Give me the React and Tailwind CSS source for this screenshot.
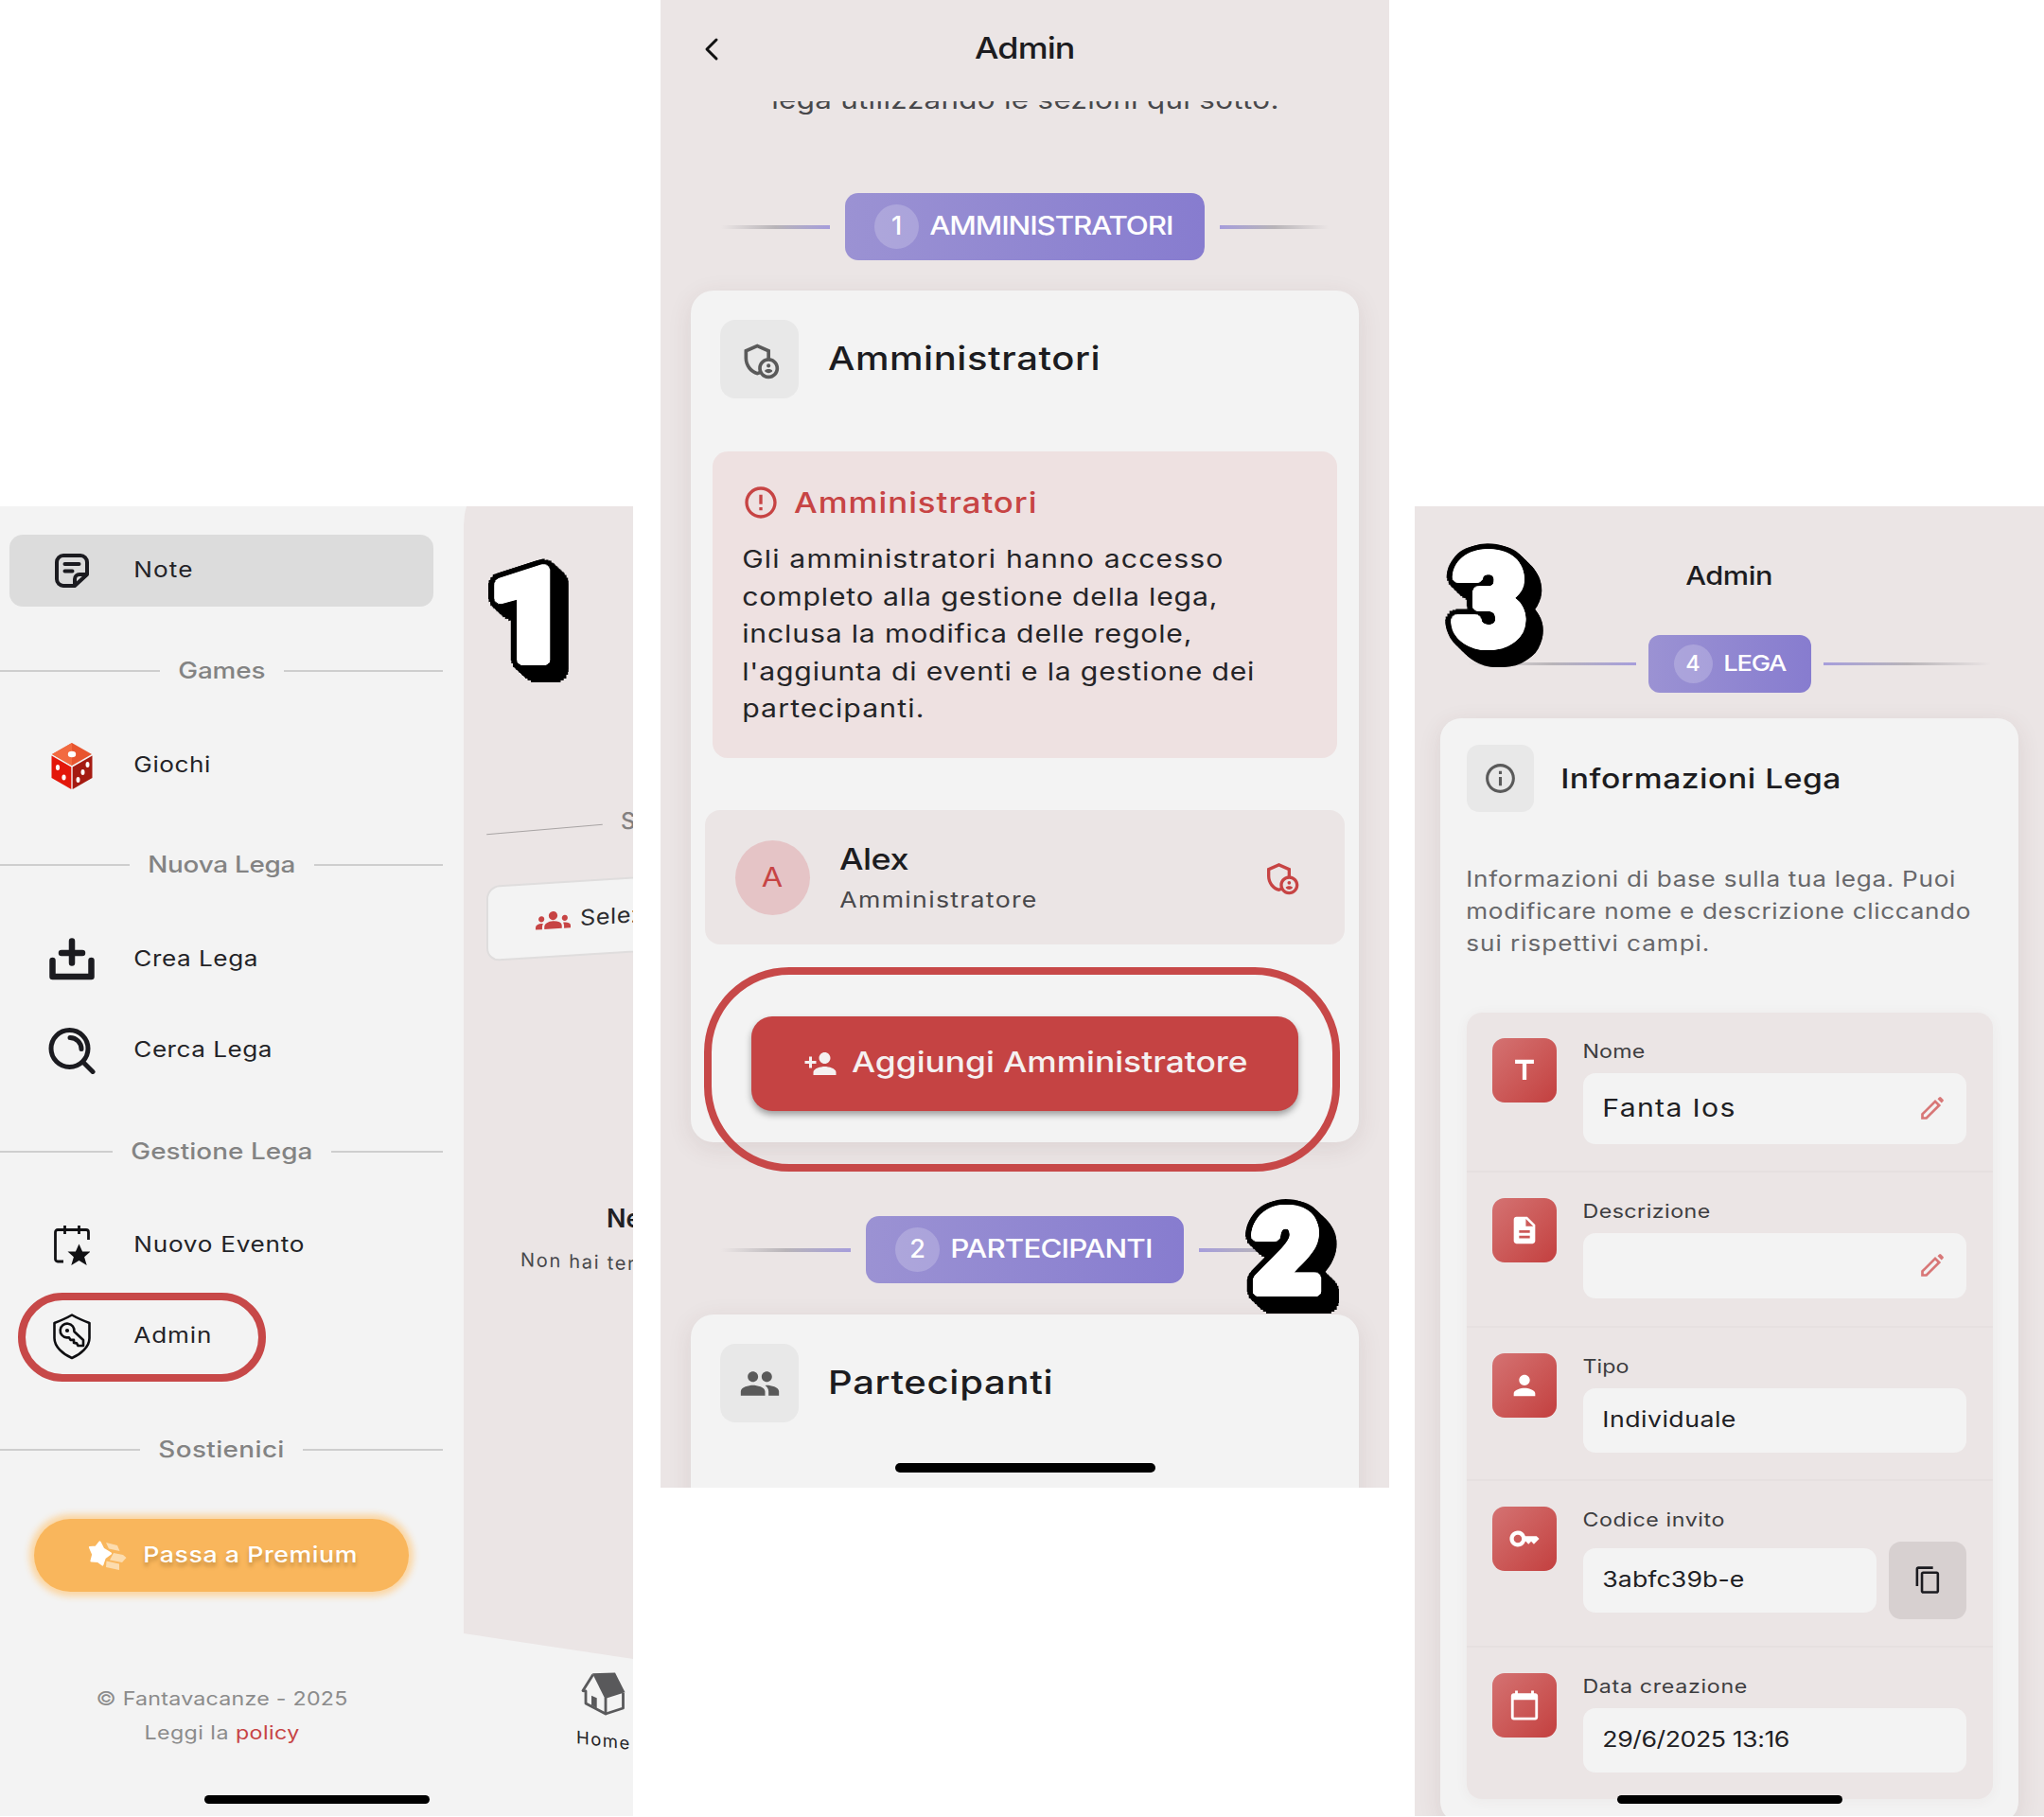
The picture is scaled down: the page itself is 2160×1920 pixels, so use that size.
import React, { useLayoutEffect, useRef, useState } from "react";
import {
  MdOutlineAdminPanelSettings,
  MdErrorOutline,
  MdPersonAdd,
  MdGroup,
  MdGroups,
  MdInfoOutline,
  MdTitle,
  MdDescription,
  MdPerson,
  MdKey,
  MdCalendarToday,
  MdContentCopy,
} from "react-icons/md";

/* One line of text, tracked so that it fills the given width. */
function Fit({ w, className = "", children }) {
  const ref = useRef(null);
  const [ls, setLs] = useState(0);
  useLayoutEffect(() => {
    const el = ref.current;
    const old = el.style.letterSpacing;
    el.style.letterSpacing = "0px";
    const natural = el.getBoundingClientRect().width / 1.16;
    el.style.letterSpacing = old;
    const size = parseFloat(getComputedStyle(el).fontSize);
    setLs((w / 1.16 - (natural - size * 0.04)) / (el.textContent.length - 1));
  }, [w]);
  return (
    <span className={`inline-block shrink-0 whitespace-nowrap text-left ${className}`} style={{ width: w }}>
      <span
        ref={ref}
        className="inline-block origin-left -translate-x-[0.03em] scale-x-[1.16]"
        style={{ letterSpacing: ls }}
      >
        {children}
      </span>
    </span>
  );
}

/* Comic style step number: rounded white face, black outline and solid extrusion. */
function Sticker({ n, className }) {
  const shadows = [];
  const ring = (r, t, color) => {
    for (let a = 0; a < 20; a++) {
      const k = (a * Math.PI) / 10;
      shadows.push(`${(t + r * Math.cos(k)).toFixed(1)}px ${(t + r * Math.sin(k)).toFixed(1)}px 0 ${color}`);
    }
  };
  ring(2.5, 0, "#fff");
  ring(5, 0, "#fff");
  for (let t = 0; t <= 12; t += 1.5) ring(11, t, "#000");
  return (
    <div
      className={`absolute font-['Roboto',sans-serif] font-black leading-none text-white ${className}`}
      style={{ textShadow: shadows.join(",") }}
    >
      {n}
    </div>
  );
}

function NoteIcon() {
  return (
    <svg viewBox="0 0 36 36" className="h-[36px] w-[36px]" fill="none" stroke="#1b1b20" strokeWidth="4" strokeLinecap="round" strokeLinejoin="round">
      <path d="M21 34H9a7 7 0 0 1-7-7V9a7 7 0 0 1 7-7h18a7 7 0 0 1 7 7v13L21 34v-7a5 5 0 0 1 5-5h8" />
      <path d="M10.500 11h15M10.500 18.500h8" />
    </svg>
  );
}

function DiceIcon() {
  return (
    <svg viewBox="0 0 44 49" className="h-[49px] w-[44px]">
      <path d="M22 0 43 12 22 24 1 12Z" fill="#e8552f" />
      <path d="M22 0v24L1 12Z" fill="#f26a40" />
      <path d="M.5 13.500 21.300 25.500V49L.5 37Z" fill="#e3170a" />
      <path d="M43.500 13.500 22.700 25.500V49L43.500 37Z" fill="#a51b12" />
      <g fill="#fff">
        <ellipse cx="22" cy="12" rx="4.200" ry="3.200" />
        <ellipse cx="7" cy="26" rx="2.100" ry="3" />
        <ellipse cx="13.500" cy="36.500" rx="2.100" ry="3" />
        <ellipse cx="38.500" cy="23" rx="2" ry="3" />
        <ellipse cx="33.500" cy="31" rx="2" ry="3" />
        <ellipse cx="28.500" cy="39" rx="2" ry="3" />
      </g>
    </svg>
  );
}

function CreateIcon() {
  return (
    <svg viewBox="0 0 50 46" className="h-[46px] w-[50px]" fill="none" stroke="#1b1b20" strokeWidth="6.500" strokeLinecap="round" strokeLinejoin="round">
      <path d="M4.500 24v17h41V24" />
      <path d="M25 3.500v23M14 16h22" />
    </svg>
  );
}

function SearchIcon() {
  return (
    <svg viewBox="0 0 50 50" className="h-[50px] w-[50px]" fill="none" stroke="#1b1b20" strokeWidth="5" strokeLinecap="round">
      <circle cx="22.500" cy="23" r="19.500" />
      <path d="M37 37.500 47 47.500" />
      <path d="M23 11.500a12 12 0 0 1 12 12" />
    </svg>
  );
}

function EventIcon() {
  return (
    <svg viewBox="0 0 38 44" className="h-[44px] w-[38px]" fill="none" stroke="#111114" strokeWidth="2.800">
      <path d="M10 39H4a2.500 2.500 0 0 1-2.500-2.500V8A2.500 2.500 0 0 1 4 5.500h30A2.500 2.500 0 0 1 36.500 8v8M11.500 1v9M26.500 1v9" />
      <path d="m26.500 20.500 3.600 8H38.500l-6.400 5.800 2.600 8.700-8.200-4.900-8.200 4.900 2.600-8.700-6.400-5.800h8.400Z" fill="#111114" stroke="none" />
    </svg>
  );
}

function ShieldKeyIcon() {
  return (
    <svg viewBox="0 0 42 50" className="h-[50px] w-[42px]" fill="none" stroke="#0e0e11" strokeWidth="2.600" strokeLinejoin="round">
      <path d="M21 2.500C27 6 33 8.500 39.500 11v16c0 9-9 17-18.500 21C11.500 44 2.500 36 2.500 27V11C9 8.500 15 6 21 2.500Z" />
      <path d="M23.400 20a7.400 7.400 0 1 0-8 6.400h2.600l1.500 2.500H23v3l3 .5 1.500 2.600H33v-6Z" />
      <circle cx="16" cy="19" r="2.100" fill="#0e0e11" stroke="none" />
    </svg>
  );
}

function StarIcon() {
  return (
    <svg viewBox="0 0 47 47" className="size-[47px]">
      <path d="m22 10 12 3 2.500 6L25 16.500ZM30 21l10 2 3.500 3-4.500 5-13-2.500ZM22.500 29.500l13.500 3V39l-14-3Z" fill="#fcdcae" />
      <path d="M15.500 9.500 19.200 16.800 27 21.500 20.800 26 18.300 33.500 13.500 29.800 6.500 29.500 8.300 22.500 5 15 11.500 14.500Z" fill="#fff" stroke="#fff" strokeWidth="2.200" strokeLinejoin="round" />
    </svg>
  );
}

function HouseIcon() {
  return (
    <svg viewBox="0 0 48 48" className="size-[48px]" fill="none" stroke="#59595b" strokeWidth="2.800" strokeLinejoin="round">
      <path d="M12.700 3.500 2 20.500l3 .5v13l21 11V28" />
      <path d="m26 45 18.500-6V23" />
      <path d="M12 2.200 36 1.500 46.500 22.300 25.300 29Z" fill="#59595b" stroke="none" />
      <path d="m11 25.700 5.700 2.600V39L11 35.700Z" fill="#59595b" stroke="none" />
    </svg>
  );
}

function PencilIcon() {
  return (
    <svg viewBox="0 0 24 24" className="size-[24px]" fill="none" stroke="#d87777" strokeWidth="2.700">
      <path d="M1.500 22.500v-4.200L15 4.800 19.200 9 5.700 22.500Z" />
      <path d="m17.500 2.300 1.700-1.700a1.400 1.400 0 0 1 2 0l2.200 2.200a1.400 1.400 0 0 1 0 2l-1.700 1.700Z" fill="#d87777" stroke="none" />
    </svg>
  );
}

function MenuRow({ icon, label, w, className = "" }) {
  return (
    <div className={`ml-[10px] flex h-[76px] w-[448px] items-center rounded-[14px] ${className}`}>
      <div className="ml-[36px] flex w-[60px] justify-center">{icon}</div>
      <Fit w={w} className="mb-px ml-[36px] text-[22.500px] leading-none text-[#232327]">{label}</Fit>
    </div>
  );
}

function Heading({ label, w, className = "" }) {
  return (
    <div className={`flex h-[40px] w-[468px] items-center gap-[20px] ${className}`}>
      <div className="h-[1.500px] flex-1 bg-[#cecece]" />
      <Fit w={w} className="text-[24px] font-medium leading-none text-[#838383]">{label}</Fit>
      <div className="h-[1.500px] flex-1 bg-[#cecece]" />
    </div>
  );
}

function Drawer() {
  return (
    <div className="relative h-full w-[490px] shrink-0 overflow-hidden">
      <MenuRow icon={<NoteIcon />} label="Note" w={61} className="mt-[30px] bg-[#dcdcdc]" />
      <Heading label="Games" w={91} className="mt-[48px]" />
      <MenuRow icon={<DiceIcon />} label="Giochi" w={80} className="mt-[42px]" />
      <Heading label="Nuova Lega" w={155} className="mt-[47px]" />
      <MenuRow icon={<CreateIcon />} label="Crea Lega" w={130} className="mt-[42px]" />
      <MenuRow icon={<SearchIcon />} label="Cerca Lega" w={145} className="mt-[20px]" />
      <Heading label="Gestione Lega" w={191} className="mt-[49px]" />
      <MenuRow icon={<EventIcon />} label="Nuovo Evento" w={179} className="mt-[41px]" />
      <MenuRow icon={<ShieldKeyIcon />} label="Admin" w={81} className="mt-[20px]" />
      <Heading label="Sostienici" w={132} className="mt-[62px]" />
      <div className="ml-[36px] mt-[53px] flex h-[77px] w-[396px] items-center rounded-full bg-[#f9b65c] shadow-[0_0_7px_5px_#fbd6a3]">
        <div className="ml-[54px] w-[47px]"><StarIcon /></div>
        <Fit w={225} className="ml-[15px] text-[23px] font-medium leading-none text-white [text-shadow:0_4px_4px_rgba(120,80,20,0.4)]">Passa a Premium</Fit>
      </div>
      <div className="mt-[95px] w-[468px] text-center text-[20px] leading-[36px] text-[#8b8b8b]">
        <div className="flex justify-center"><Fit w={265}>© Fantavacanze - 2025</Fit></div>
        <div className="flex justify-center">
          <Fit w={163}>Leggi la <span className="text-[#c74444]">policy</span></Fit>
        </div>
      </div>
      <div className="absolute left-[19px] top-[831px] h-[94px] w-[262px] rounded-full border-[8px] border-[#c74848]" />
    </div>
  );
}

function TiltedHome() {
  return (
    <div className="relative h-full w-[179px] shrink-0 overflow-hidden">
      <div className="absolute inset-0 bg-[#ebe5e5] [clip-path:polygon(3px_0,100%_0,100%_1218px,0_1191px,0_20px,1px_8px)]" />
      <div className="relative flex flex-col">
        <div className="mt-[313px] flex h-[40px] items-center">
          <div className="ml-[24px] h-px w-[123px] shrink-0 -rotate-[5deg] translate-y-[8px] bg-[#a8a4a4]" />
          <span className="ml-[19px] text-[24px] font-medium leading-none text-[#838080]">S</span>
        </div>
        <div className="ml-[24px] mt-[48px] flex h-[80px] w-[260px] origin-left -skew-y-[3.500deg] items-center rounded-[14px] border-2 border-[#dfdddd] bg-[#f3f3f3]">
          <MdGroups className="ml-[50px] size-[37px] text-[#c74444]" />
          <span className="ml-[10px] origin-left scale-x-[1.100] text-[23px] leading-none tracking-[0.500px] text-[#2b2b2e]">Selez</span>
        </div>
        <span className="ml-[151px] mt-[254px] text-[27px] font-semibold leading-[36px] text-[#202024]">Ne</span>
        <span className="ml-[60px] mt-[13px] origin-left skew-y-[2deg] whitespace-nowrap text-[20px] leading-[24px] tracking-[1.700px] text-[#48484b]">Non hai ter</span>
        <div className="ml-[124px] mt-[423px]"><HouseIcon /></div>
        <span className="ml-[119px] mt-[10px] origin-left skew-y-[7deg] text-[18.500px] leading-[22px] tracking-[1.500px] text-[#242428]">Home</span>
      </div>
    </div>
  );
}

function PhoneDrawer() {
  return (
    <section className="relative mt-[535px] flex h-[1384px] w-[669px] shrink-0 overflow-hidden bg-[#f3f3f3]">
      <Drawer />
      <TiltedHome />
      <Sticker n="1" className="left-[519px] top-[49px] scale-x-[1.080] text-[136px]" />
      <div className="absolute left-[216px] top-[1362px] h-[9px] w-[238px] rounded-full bg-black" />
    </section>
  );
}

function Admins() {
  return (
    <div className="relative mx-[32px] mt-[32px] h-[900px] rounded-[24px] bg-[#f3f3f3] px-[15px] pt-[31px] shadow-[0_6px_26px_rgba(90,50,50,0.1)]">
      <div className="ml-[16px] flex items-center">
        <div className="flex size-[83px] items-center justify-center rounded-[16px] bg-[#e8e8e8]">
          <MdOutlineAdminPanelSettings className="size-[44px] text-[#5a5a5a]" />
        </div>
        <Fit w={286} className="ml-[32px] text-[34.500px] font-medium leading-none text-[#1c1c20]">Amministratori</Fit>
      </div>
      <div className="mx-[8px] mt-[56px] h-[324px] rounded-[16px] bg-[#eee1e1] px-[32px] pt-[34px] text-[#c74444]">
        <div className="flex h-[40px] items-center">
          <MdErrorOutline className="-ml-[1px] size-[40px]" />
          <Fit w={255} className="ml-[16px] text-[30px] font-medium leading-none">Amministratori</Fit>
        </div>
        <div className="mt-[20px] flex flex-col text-[26px] leading-[39.600px] text-[#242427]">
          <Fit w={507}>Gli amministratori hanno accesso</Fit>
          <Fit w={501}>completo alla gestione della lega,</Fit>
          <Fit w={474}>inclusa la modifica delle regole,</Fit>
          <Fit w={540}>l'aggiunta di eventi e la gestione dei</Fit>
          <Fit w={191}>partecipanti.</Fit>
        </div>
      </div>
      <div className="mt-[55px] flex h-[142px] items-center rounded-[16px] bg-[#ebe5e5] pl-[32px] pr-[47px]">
        <div className="flex size-[79px] items-center justify-center rounded-full bg-[#e5c4c6] text-[29px] leading-none text-[#c74444]">
          <span className="scale-x-[1.120] pb-[2px]">A</span>
        </div>
        <div className="ml-[32px] flex flex-1 flex-col pt-[4px] text-[#48484b]">
          <Fit w={72} className="text-[31px] font-medium leading-[42px] text-[#1c1c20]">Alex</Fit>
          <Fit w={207} className="mt-[2px] text-[23px] leading-[40px]">Amministratore</Fit>
        </div>
        <MdOutlineAdminPanelSettings className="size-[40px] text-[#c74444]" />
      </div>
      <div className="ml-[49px] mt-[76px] flex h-[100px] w-[578px] items-center rounded-[22px] bg-[#c54343] shadow-[0_4px_7px_rgba(0,0,0,0.35)]">
        <MdPersonAdd className="ml-[55px] size-[36px] text-[#f5f0f0]" />
        <Fit w={417} className="mb-[3px] ml-[16px] text-[30.500px] font-medium leading-none text-[#f5f0f0]">Aggiungi Amministratore</Fit>
      </div>
    </div>
  );
}

function SectionPill({ n, label, w, pill, small }) {
  const bar = small ? "h-[3px]" : "h-[4px]";
  return (
    <div className={`flex items-center ${small ? "gap-[13px] px-[56px]" : "gap-[16px] px-[64px]"}`}>
      <div className={`${bar} flex-1 bg-gradient-to-r from-transparent via-[#b8b4b8] to-[#a69ddb]`} />
      <div
        className={`flex items-center bg-gradient-to-r from-[#9b92d3] to-[#877ccf] font-medium leading-none text-white ${
          small ? "h-[61px] rounded-[12px] pl-[27px] text-[23.500px]" : "h-[71px] rounded-[14px] pl-[31px] text-[27px]"
        }`}
        style={{ width: pill }}
      >
        <div className={`mr-[12px] flex shrink-0 items-center justify-center rounded-full bg-white/20 pb-[2px] ${small ? "size-[41px]" : "size-[47px]"}`}>
          {n}
        </div>
        <Fit w={w} className="mb-[2px]">{label}</Fit>
      </div>
      <div className={`${bar} flex-1 bg-gradient-to-l from-transparent via-[#b8b4b8] to-[#a69ddb]`} />
    </div>
  );
}

function PhoneAdmins() {
  return (
    <section className="relative ml-[29px] h-[1572px] w-[770px] shrink-0 overflow-hidden bg-[#ebe5e5]">
      <header className="relative flex h-[107px] items-center justify-center pb-[7px]">
        <svg viewBox="0 0 16 26" className="absolute left-[46px] top-[39px] h-[26px] w-[16px]" fill="none" stroke="#111" strokeWidth="3" strokeLinecap="round" strokeLinejoin="round">
          <path d="M13 3 3 13l10 10" />
        </svg>
        <Fit w={105} className="text-[31px] font-medium leading-none text-[#1c1c20]">Admin</Fit>
      </header>
      <div className="flex h-[97px] justify-center overflow-hidden">
        <Fit w={535} className="-mt-[21px] text-[27px] leading-[40px] text-[#48484b]">lega utilizzando le sezioni qui sotto.</Fit>
      </div>
      <SectionPill n="1" label="AMMINISTRATORI" w={257} pill={380} />
      <Admins />
      <div className="mt-[78px]"><SectionPill n="2" label="PARTECIPANTI" w={213} pill={336} /></div>
      <div className="mx-[32px] mt-[33px] h-[300px] rounded-[24px] bg-[#f3f3f3] px-[31px] pt-[31px] shadow-[0_6px_26px_rgba(90,50,50,0.1)]">
        <div className="flex items-center">
          <div className="flex size-[83px] items-center justify-center rounded-[16px] bg-[#e8e8e8]">
            <MdGroup className="size-[44px] text-[#5a5a5a]" />
          </div>
          <Fit w={236} className="ml-[32px] text-[34.500px] font-medium leading-none text-[#1c1c20]">Partecipanti</Fit>
        </div>
      </div>
      <div className="absolute left-[46px] top-[1022px] h-[216px] w-[672px] rounded-[90px] border-[8px] border-[#c74848]" />
      <Sticker n="2" className="left-[627px] top-[1264px] scale-x-[1.040] text-[120px]" />
      <div className="absolute left-[248px] top-[1546px] h-[10px] w-[275px] rounded-full bg-black" />
    </section>
  );
}

function Tile({ icon: Icon }) {
  return (
    <div className="flex size-[68px] shrink-0 items-center justify-center rounded-[13px] bg-gradient-to-br from-[#d47272] to-[#c33f3f]">
      <Icon className="size-[34px] text-white" />
    </div>
  );
}

const fields = [
  { icon: MdTitle, label: "Nome", lw: 65, value: "Fanta Ios", vw: 139, edit: true, row: "h-[169px]", box: "h-[75px]", text: "text-[26px]" },
  { icon: MdDescription, label: "Descrizione", lw: 134, value: "", vw: 0, edit: true, row: "h-[164px]", box: "h-[69px]", text: "text-[23px]" },
  { icon: MdPerson, label: "Tipo", lw: 48, value: "Individuale", vw: 140, row: "h-[162px]", box: "h-[68px]", text: "text-[23px]" },
  { icon: MdKey, label: "Codice invito", lw: 149, value: "3abfc39b-e", vw: 149, copy: true, row: "h-[176px]", box: "h-[68px]", text: "text-[23px]" },
  { icon: MdCalendarToday, label: "Data creazione", lw: 173, value: "29/6/2025 13:16", vw: 197, row: "h-[160px]", box: "h-[68px]", text: "text-[23px]" },
];

function Field({ f, last }) {
  return (
    <div className={`flex gap-[28px] pl-[27px] pr-[28px] pt-[27px] ${f.row} ${last ? "" : "border-b-2 border-[#e6e0e0]"}`}>
      <Tile icon={f.icon} />
      <div className="flex flex-1 flex-col">
        <Fit w={f.lw} className="h-[30px] pt-px text-[20px] leading-[26px] text-[#3d3d40]">{f.label}</Fit>
        <div className="mt-[7px] flex items-center gap-[13px]">
          <div className={`flex flex-1 items-center justify-between rounded-[13px] bg-[#f3f3f3] pl-[21px] pr-[24px] ${f.box}`}>
            {f.value ? <Fit w={f.vw} className={`leading-none text-[#202023] ${f.text}`}>{f.value}</Fit> : <span />}
            {f.edit && <PencilIcon />}
          </div>
          {f.copy && (
            <div className="flex size-[82px] items-center justify-center rounded-[13px] bg-[#d7d0d0]">
              <MdContentCopy className="size-[31px] text-[#1b1b20]" />
            </div>
          )}
        </div>
      </div>
    </div>
  );
}

function PhoneLega() {
  return (
    <section className="relative ml-[27px] mt-[535px] h-[1384px] w-[665px] shrink-0 overflow-hidden bg-[#ebe5e5]">
      <header className="flex h-[136px] items-center justify-center pt-[10px]">
        <Fit w={91} className="text-[26.500px] font-medium leading-none text-[#1c1c20]">Admin</Fit>
      </header>
      <SectionPill n="4" label="LEGA" w={66} pill={172} small />
      <div className="mx-[27px] mt-[27px] h-[1167px] rounded-[22px] bg-[#f3f3f3] pl-[28px] pr-[27px] pt-[28px] shadow-[0_6px_24px_rgba(90,50,50,0.1)]">
        <div className="flex items-center">
          <div className="flex size-[71px] items-center justify-center rounded-[13px] bg-[#e8e8e8]">
            <MdInfoOutline className="size-[37px] text-[#5a5a5a]" />
          </div>
          <Fit w={295} className="ml-[29px] text-[29px] font-medium leading-none text-[#1c1c20]">Informazioni Lega</Fit>
        </div>
        <div className="mt-[54px] flex flex-col text-[22.500px] leading-[34.200px] text-[#67676a]">
          <Fit w={516}>Informazioni di base sulla tua lega. Puoi</Fit>
          <Fit w={532}>modificare nome e descrizione cliccando</Fit>
          <Fit w={256}>sui rispettivi campi.</Fit>
        </div>
        <div className="mt-[55px] rounded-[16px] bg-[#ebe5e5] shadow-[0_2px_14px_rgba(90,50,50,0.05)]">
          {fields.map((f, i) => (
            <Field key={f.label} f={f} last={i === fields.length - 1} />
          ))}
        </div>
      </div>
      <Sticker n="3" className="left-[41px] top-[36px] scale-x-[1.020] text-[131px]" />
      <div className="absolute left-[214px] top-[1362px] h-[9px] w-[238px] rounded-full bg-black" />
    </section>
  );
}

export default function App() {
  return (
    <main className="flex h-[1920px] w-[2160px] items-start overflow-hidden bg-white font-['Inter',sans-serif]">
      <PhoneDrawer />
      <PhoneAdmins />
      <PhoneLega />
    </main>
  );
}
